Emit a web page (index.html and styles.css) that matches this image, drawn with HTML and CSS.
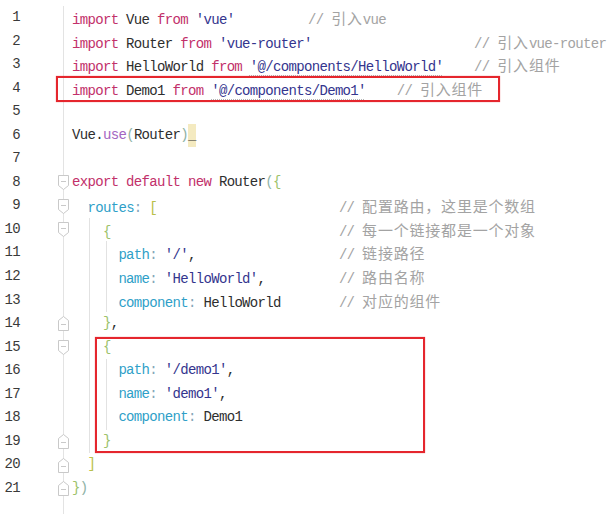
FILE: index.html
```html
<!DOCTYPE html>
<html>
<head>
<meta charset="utf-8">
<link rel="stylesheet" href="styles.css">
</head>
<body>
<div class="editor">
  <div class="line"><span class="num">1</span><span class="fold"></span><span class="code"><span class="kw">import</span> Vue <span class="kw">from</span> <span class="str">'vue'</span>         <span class="half"></span><span class="cm">// <span class="zh">引入</span>vue</span></span></div>
  <div class="line"><span class="num">2</span><span class="fold"></span><span class="code"><span class="kw">import</span> Router <span class="kw">from</span> <span class="str">'vue-router'</span>                     <span class="cm">// <span class="zh">引入</span>vue-router</span></span></div>
  <div class="line"><span class="num">3</span><span class="fold"></span><span class="code"><span class="kw">import</span> HelloWorld <span class="kw">from</span> <span class="str path">'@/components/HelloWorld'</span>    <span class="cm">// <span class="zh">引入组件</span></span></span></div>
  <div class="line"><span class="num">4</span><span class="fold"></span><span class="code"><span class="kw">import</span> Demo1 <span class="kw">from</span> <span class="str path">'@/components/Demo1'</span>    <span class="cm">// <span class="zh">引入组件</span></span></span></div>
  <div class="line"><span class="num">5</span><span class="fold"></span><span class="code"></span></div>
  <div class="line"><span class="num">6</span><span class="fold"></span><span class="code">Vue.<span class="fn">use</span><span class="pa">(</span>Router<span class="pa">)</span><span class="caret">_</span></span></div>
  <div class="line"><span class="num">7</span><span class="fold"></span><span class="code"></span></div>
  <div class="line"><span class="num">8</span><span class="fold"><svg class="mk" width="13" height="17" viewBox="0 0 13 17"><path d="M1.5 1.5H11.5V11.5L6.5 15.5L1.5 11.5Z"/><path d="M4 7.5H9"/></svg></span><span class="code"><span class="kw">export default new</span> Router<span class="pa">(</span><span class="br">{</span></span></div>
  <div class="line"><span class="num">9</span><span class="fold"><svg class="mk" width="13" height="17" viewBox="0 0 13 17"><path d="M1.5 1.5H11.5V11.5L6.5 15.5L1.5 11.5Z"/><path d="M4 7.5H9"/></svg></span><span class="code">  <span class="key">routes</span><span class="co">:</span> <span class="sq">[</span>                       <span class="half"></span><span class="cm">// <span class="zh">配置路由，这里是个数组</span></span></span></div>
  <div class="line"><span class="num">10</span><span class="fold"><svg class="mk" width="13" height="17" viewBox="0 0 13 17"><path d="M1.5 1.5H11.5V11.5L6.5 15.5L1.5 11.5Z"/><path d="M4 7.5H9"/></svg></span><span class="code g1">    <span class="br">{</span>                             <span class="half"></span><span class="cm">// <span class="zh">每一个链接都是一个对象</span></span></span></div>
  <div class="line"><span class="num">11</span><span class="fold"></span><span class="code g1 g2">      <span class="key">path</span><span class="co">:</span> <span class="str">'/'</span>,                  <span class="half"></span><span class="cm">// <span class="zh">链接路径</span></span></span></div>
  <div class="line"><span class="num">12</span><span class="fold"></span><span class="code g1 g2">      <span class="key">name</span><span class="co">:</span> <span class="str">'HelloWorld'</span>,         <span class="half"></span><span class="cm">// <span class="zh">路由名称</span></span></span></div>
  <div class="line"><span class="num">13</span><span class="fold"></span><span class="code g1 g2">      <span class="key">component</span><span class="co">:</span> HelloWorld       <span class="half"></span><span class="cm">// <span class="zh">对应的组件</span></span></span></div>
  <div class="line"><span class="num">14</span><span class="fold"><svg class="mk" width="13" height="17" viewBox="0 0 13 17"><path d="M1.5 15.5H11.5V5.5L6.5 1.5L1.5 5.5Z"/><path d="M4 9.5H9"/></svg></span><span class="code g1">    <span class="br">}</span>,</span></div>
  <div class="line"><span class="num">15</span><span class="fold"><svg class="mk" width="13" height="17" viewBox="0 0 13 17"><path d="M1.5 1.5H11.5V11.5L6.5 15.5L1.5 11.5Z"/><path d="M4 7.5H9"/></svg></span><span class="code g1">    <span class="br">{</span></span></div>
  <div class="line"><span class="num">16</span><span class="fold"></span><span class="code g1 g2">      <span class="key">path</span><span class="co">:</span> <span class="str">'/demo1'</span>,</span></div>
  <div class="line"><span class="num">17</span><span class="fold"></span><span class="code g1 g2">      <span class="key">name</span><span class="co">:</span> <span class="str">'demo1'</span>,</span></div>
  <div class="line"><span class="num">18</span><span class="fold"></span><span class="code g1 g2">      <span class="key">component</span><span class="co">:</span> Demo1</span></div>
  <div class="line"><span class="num">19</span><span class="fold"><svg class="mk" width="13" height="17" viewBox="0 0 13 17"><path d="M1.5 15.5H11.5V5.5L6.5 1.5L1.5 5.5Z"/><path d="M4 9.5H9"/></svg></span><span class="code g1">    <span class="br">}</span></span></div>
  <div class="line"><span class="num">20</span><span class="fold"><svg class="mk" width="13" height="17" viewBox="0 0 13 17"><path d="M1.5 15.5H11.5V5.5L6.5 1.5L1.5 5.5Z"/><path d="M4 9.5H9"/></svg></span><span class="code">  <span class="sq">]</span></span></div>
  <div class="line"><span class="num">21</span><span class="fold"><svg class="mk" width="13" height="17" viewBox="0 0 13 17"><path d="M1.5 15.5H11.5V5.5L6.5 1.5L1.5 5.5Z"/><path d="M4 9.5H9"/></svg></span><span class="code"><span class="br">}</span><span class="pa">)</span></span></div>
  <div class="line"><span class="num"></span><span class="fold"></span><span class="code"></span></div>
  <div class="box box1"></div>
  <div class="box box2"></div>
</div>
</body>
</html>
```
FILE: styles.css
```css
html, body {
  margin: 0;
  padding: 0;
  background: #ffffff;
}
.editor {
  position: relative;
  padding-top: 6px;
  width: 613px;
  height: 508px;
  overflow: hidden;
  font-family: "Liberation Mono", "DejaVu Sans Mono", monospace;
  font-size: 14px;
  letter-spacing: -0.67px;
  color: #2e2e2e;
}
.line {
  display: flex;
  height: 23.55px;
  line-height: 23.55px;
}
.num {
  width: 20px;
  flex: none;
  text-align: right;
  color: #3a3a3a;
}
.fold {
  width: 52px;
  flex: none;
  display: flex;
  align-items: center;
  padding-left: 37px;
  box-sizing: border-box;
  background: linear-gradient(#e3e3e3, #e3e3e3) no-repeat 43px 0 / 1px 100%;
}
.mk {
  display: block;
  fill: #ffffff;
  stroke: #c9c9c9;
  stroke-width: 1;
}
.code {
  flex: 1;
  white-space: pre;
}
.g1 {
  background: linear-gradient(#e2e2e2, #e2e2e2) no-repeat 17px 0 / 1px 100%;
}
.g1.g2 {
  background:
    linear-gradient(#e2e2e2, #e2e2e2) no-repeat 17px 0 / 1px 100%,
    linear-gradient(#e2e2e2, #e2e2e2) no-repeat 34px 0 / 1px 100%;
}
.kw { color: #c2306a; }
.str { color: #34358e; }
.path {
  text-decoration: underline dotted #b4b4b4 1px;
  text-underline-offset: 4px;
}
.fn { color: #a466c2; }
.key { color: #2f9fc8; }
.co { color: #86a6b8; }
.pa { color: #8fb3a6; }
.br { color: #9cc26a; }
.sq { color: #b9c04a; }
.cm { color: #a3a3a3; }
.zh {
  font-family: "Noto Sans CJK SC", sans-serif;
  font-size: 15px;
  letter-spacing: 0.8px;
}
.half {
  display: inline-block;
  width: 4px;
}
.caret {
  display: inline-block;
  width: 8px;
  height: 23.55px;
  vertical-align: top;
  background: #f4eac0;
  color: #333;
}
.box {
  position: absolute;
  border: 2px solid #e5262d;
  box-shadow: 0 0 1px rgba(229, 38, 45, 0.6);
}
.box1 {
  left: 56px;
  top: 76px;
  width: 440px;
  height: 22px;
}
.box2 {
  left: 95px;
  top: 337px;
  width: 326px;
  height: 112px;
}
```
